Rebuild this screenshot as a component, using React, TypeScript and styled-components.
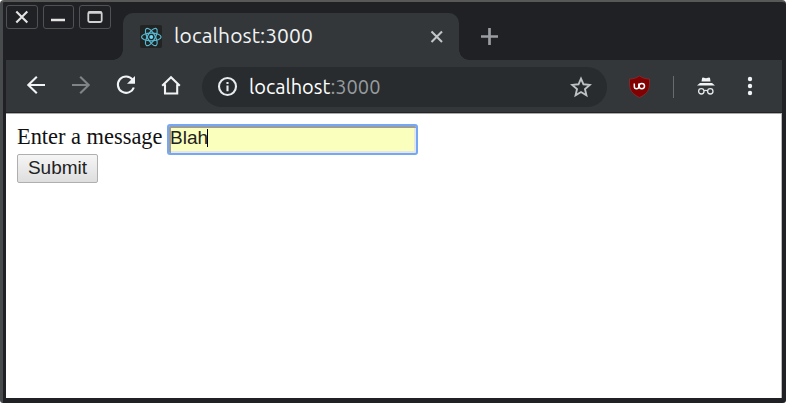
import React from 'react';
import styled, { createGlobalStyle } from 'styled-components';

const GlobalStyle = createGlobalStyle`
  * { box-sizing: border-box; }
  body { margin: 0; background: #fff; overflow: hidden; }
`;

const Window = styled.div`
  width: 786px;
  height: 403px;
  display: flex;
  flex-direction: column;
  background: #202124;
  border-top: 2px solid #585858;
  border-left: 3px solid #484b4c;
  border-radius: 4px 4px 3px 3px;
  padding: 1px 4px 5px 3px;
  overflow: hidden;
`;

const TabBar = styled.header`
  height: 57px;
  flex: none;
  display: flex;
  align-items: flex-end;
`;

const WindowControls = styled.div`
  display: flex;
  gap: 5px;
  align-self: flex-start;
  width: 117px;
  padding-top: 2px;
`;

const ControlButton = styled.button`
  width: 31.5px;
  height: 24px;
  padding: 0;
  display: grid;
  place-items: center;
  background: #202124;
  border: 1px solid #505153;
  border-radius: 3px;
`;

const Tab = styled.div`
  position: relative;
  width: 336px;
  height: 47px;
  padding: 0 15px 0 17px;
  display: flex;
  align-items: center;
  background: #333739;
  border-radius: 10px 10px 0 0;

  &::before,
  &::after {
    content: '';
    position: absolute;
    bottom: 0;
    width: 10px;
    height: 10px;
  }
  &::before {
    left: -10px;
    background: radial-gradient(circle at 0 0, transparent 9.5px, #333739 10px);
  }
  &::after {
    right: -10px;
    background: radial-gradient(circle at 100% 0, transparent 9.5px, #333739 10px);
  }
`;

const Favicon = styled.span`
  width: 22px;
  height: 23px;
  display: grid;
  place-items: center;
  background: #222323;
  border-radius: 2px;
`;

const TabTitle = styled.span`
  flex: 1;
  margin-left: 12px;
  padding-bottom: 3px;
  font: 21px/28px Ubuntu, 'Noto Sans', sans-serif;
  letter-spacing: 0.06px;
  color: #f1f3f4;
`;

const NewTab = styled.span`
  margin: 0 0 15px 22px;
  display: flex;
`;

const Toolbar = styled.nav`
  height: 53px;
  flex: none;
  display: flex;
  align-items: center;
  padding-left: 18px;
  background: #333739;
  border-bottom: 1px solid #222528;
`;

const NavButtons = styled.div`
  width: 178px;
  display: flex;
  gap: 21px;
`;

const AddressBar = styled.div`
  width: 405px;
  height: 40px;
  margin-top: 1px;
  padding: 0 15px;
  display: flex;
  align-items: center;
  background: #282c2e;
  border-radius: 20px;
`;

const Url = styled.span`
  flex: 1;
  margin-left: 11px;
  padding-top: 1px;
  font: 20px/28px Ubuntu, 'Noto Sans', sans-serif;
  color: #fff;
`;

const Port = styled.span`
  color: #979b9e;
`;

const Actions = styled.div`
  display: flex;
  align-items: center;
  margin: 1px 0 0 22px;
`;

const Divider = styled.span`
  width: 1px;
  height: 22px;
  margin: 0 22px 0 23px;
  background: #686c6e;
`;

const MenuDots = styled.span`
  margin: 0 0 2px 28px;
  display: flex;
`;

const Page = styled.main`
  flex: 1;
  padding: 10px 11px;
  background: #fff;
  border-top: 1px solid #aaa;
  border-right: 1px solid #bbb;
`;

const Field = styled.label`
  display: flex;
  align-items: flex-start;
  height: 30px;
  font: 22.4px/25px 'Liberation Serif', serif;
  color: #111;
`;

const FieldName = styled.span`
  width: 150px;
  white-space: nowrap;
`;

const MessageBox = styled.span`
  width: 250.5px;
  height: 31px;
  display: flex;
  padding: 0 1px;
  background: #faffbd;
  border: 2px solid #75a7f5;
  border-radius: 3px;
  box-shadow: inset 1px 1px 0 1px #9c9d99, inset -1px -1px 0 1px #e5e6e8;
  font: 19px/23px 'Liberation Sans', sans-serif;
  color: #222;
`;

const Caret = styled.span`
  width: 1px;
  height: 18px;
  margin-top: 3px;
  margin-left: -1px;
  background: #000;
`;

const SubmitButton = styled.button`
  display: block;
  width: 81px;
  height: 29px;
  padding: 0 0 3px;
  background: linear-gradient(#f5f5f5, #dedede);
  border: 1px solid #afafaf;
  border-radius: 2px;
  font: 19px/23px 'Liberation Sans', sans-serif;
  color: #222;
`;

const Glyph = ({ w = 24, h = 24, color = '#f1f3f4', children }: {
  w?: number; h?: number; color?: string; children: React.ReactNode;
}) => (
  <svg width={w} height={h} viewBox={`0 0 ${w} ${h}`} fill="none" stroke={color} strokeWidth="2.1">
    {children}
  </svg>
);

export default function App() {
  return (
    <>
      <GlobalStyle />
      <Window>
        <TabBar>
          <WindowControls>
            <ControlButton aria-label="Close window">
              <Glyph w={14} h={14} color="#e4e4e4"><path d="M1.3 1.5l11 11m0-11l-11 11" /></Glyph>
            </ControlButton>
            <ControlButton aria-label="Minimize">
              <Glyph w={14} h={14} color="#e4e4e4"><path d="M0 10h14" strokeWidth="2.6" /></Glyph>
            </ControlButton>
            <ControlButton aria-label="Maximize">
              <Glyph w={16} h={14} color="#d2d2d2"><rect x="1.3" y="2" width="13.4" height="10" rx="1.5" strokeWidth="1.8" /><path d="M1.5 2.8h13" /></Glyph>
            </ControlButton>
          </WindowControls>
          <Tab>
            <Favicon>
              <Glyph w={22} h={22} color="#57b9d2">
                <g strokeWidth="1.2">
                  <ellipse cx="11.3" cy="11" rx="9.8" ry="3.8" />
                  <ellipse cx="11.3" cy="11" rx="9.8" ry="3.8" transform="rotate(60 11.3 11)" />
                  <ellipse cx="11.3" cy="11" rx="9.8" ry="3.8" transform="rotate(120 11.3 11)" />
                </g>
                <circle cx="11.3" cy="11" r="1.9" fill="#61dafb" stroke="none" />
              </Glyph>
            </Favicon>
            <TabTitle>localhost:3000</TabTitle>
            <Glyph w={14} h={14} color="#c2c5c7"><path d="M1.5 1.5L12 12m0-10.5L1.5 12" /></Glyph>
          </Tab>
          <NewTab>
            <Glyph w={17} h={17} color="#999da1"><path d="M8.5 0v17M0 8.5h17" strokeWidth="2.7" /></Glyph>
          </NewTab>
        </TabBar>
        <Toolbar>
          <NavButtons>
            <Glyph><path d="M21 11H4m8.800-8.200L4.300 11l8.500 8.200" /></Glyph>
            <Glyph color="#808487"><path d="M3 11h17M11.200 2.800l8.500 8.200-8.500 8.200" /></Glyph>
            <Glyph><path d="M18.500 5.500A8.200 8.200 0 1 0 19.800 13.500" /><path d="M21 2v7.800h-8z" fill="#f1f3f4" stroke="none" /></Glyph>
            <Glyph><path d="M3.200 11.800L12 3.300l8.800 8.500M6 10.300v9.200h12.200v-9.200" /></Glyph>
          </NavButtons>
          <AddressBar>
            <Glyph w={21} h={21} color="#e8eaed"><circle cx="10.5" cy="10.5" r="8.5" /><path d="M10.5 9.500v5.700M10.500 6v2" /></Glyph>
            <Url>localhost<Port>:3000</Port></Url>
            <Glyph w={22} h={22} color="#bfc2c4"><path d="M11 2.600l2.500 5.700 6.300.600-4.800 4.200 1.400 6.100L11 16l-5.400 3.200L7 13.100 2.200 8.900l6.300-.600z" strokeWidth="1.9" /></Glyph>
          </AddressBar>
          <Actions>
            <Glyph w={21} h={24}>
              <path d="M10.500 1C7.500 3 4.300 4 .500 4c0 8.600-.500 13.500 10 18.500C21 17.500 20.500 12.600 20.500 4c-3.800 0-7-1-10-3z" fill="#810002" stroke="#8f3033" strokeWidth=".7" />
              <path d="M5.300 8.500v3q0 2.300 2.200 2.300 2.300 0 2.300-2.300V8.500" stroke="#fff" strokeWidth="1.5" />
              <circle cx="12.8" cy="11.1" r="2.7" stroke="#fff" strokeWidth="1.5" />
            </Glyph>
            <Divider />
            <Glyph w={20} h={20} color="#e5e7e8">
              <path d="M6 1.500q0-1 1-1l3 .700 3-.700q1 0 1.100 1L14.500 4.500h-9zM4 6h12l3 2.500H1z" fill="#f1f3f4" stroke="none" />
              <circle cx="5.3" cy="14.3" r="2.7" strokeWidth="1.3" />
              <circle cx="14.3" cy="14.3" r="2.7" strokeWidth="1.3" />
              <path d="M8 13.800q1.800-1 3.600 0" strokeWidth="1.3" />
            </Glyph>
            <MenuDots>
              <Glyph w={12} h={22}>
                <g fill="#f1f3f4" stroke="none"><circle cx="6" cy="4" r="2.2" /><circle cx="6" cy="11" r="2.2" /><circle cx="6" cy="18" r="2.2" /></g>
              </Glyph>
            </MenuDots>
          </Actions>
        </Toolbar>
        <Page>
          <Field>
            <FieldName>Enter a message</FieldName>
            <MessageBox>Blah<Caret /></MessageBox>
          </Field>
          <SubmitButton>Submit</SubmitButton>
        </Page>
      </Window>
    </>
  );
}
